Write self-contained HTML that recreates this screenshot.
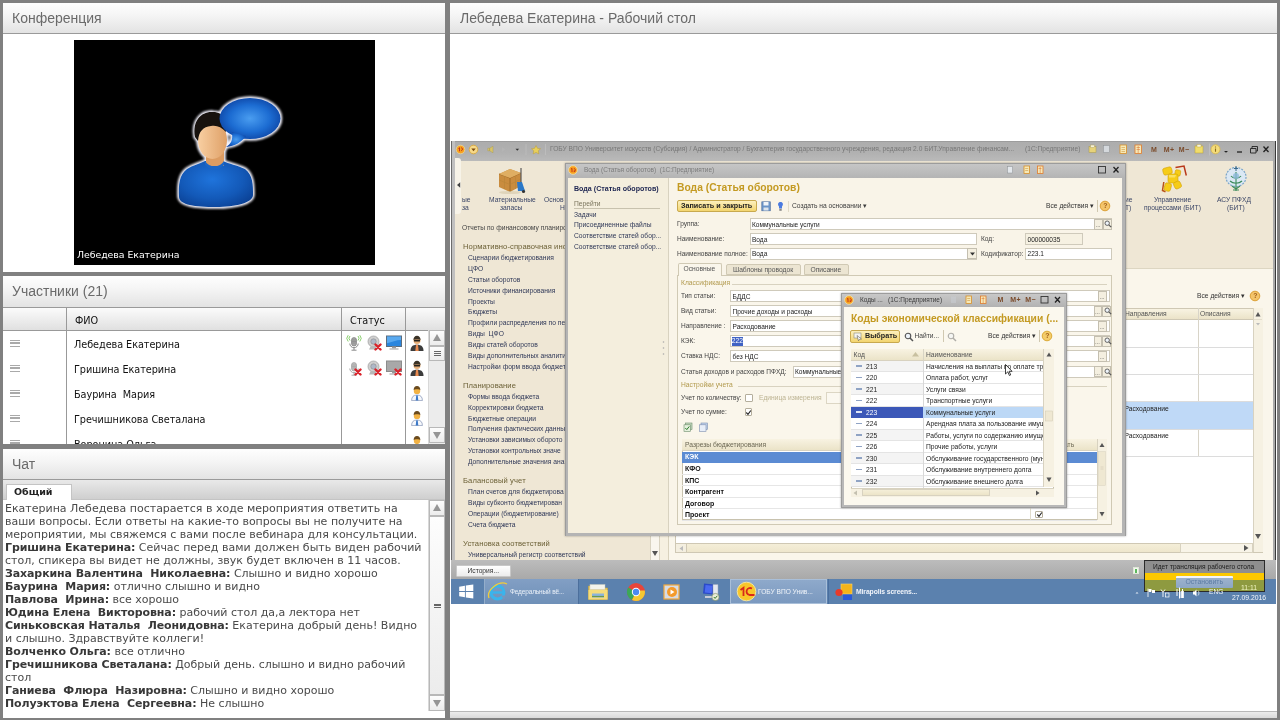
<!DOCTYPE html>
<html lang="ru"><head><meta charset="utf-8"><title>Вебинар</title>
<style>
*{box-sizing:border-box;margin:0;padding:0}
html,body{width:1280px;height:720px;overflow:hidden;background:#808080}
body{position:relative;font-family:"DejaVu Sans","Liberation Sans",sans-serif;font-size:11px;color:#333}
.panel{position:absolute;background:#fff;overflow:hidden;will-change:transform}
.hdr{position:absolute;left:0;top:0;right:0;height:31px;background:linear-gradient(#fefefe,#f5f5f5 40%,#e3e3e3);border-bottom:1px solid #9a9a9a;font:14px "Liberation Sans",sans-serif;color:#6a6a6a;padding:7px 0 0 9px;white-space:nowrap}
/* participants */
.colh{position:absolute;top:32px;height:23px;background:linear-gradient(#fbfbfb,#e0e0e0);border-bottom:1px solid #999;border-right:1px solid #999;font-size:9.7px;color:#111;padding:6.7px 0 0 8px;letter-spacing:-.05px}
.row{position:absolute;left:71px;font-size:9.7px;color:#111;white-space:pre;letter-spacing:-.05px}
.grip{position:absolute;left:7px;width:10px;height:7px;border-top:1.5px solid #aaa;border-bottom:1.5px solid #aaa}
.grip:after{content:"";position:absolute;left:0;right:0;top:1.3px;height:1.5px;background:#aaa}
.vline{position:absolute;width:1px;background:#999}
.ic{position:absolute;width:16px;height:16px}
.sb{position:absolute;background:#ececec;border-left:1px solid #d8d8d8}
.sbb{position:absolute;left:0;width:16px;height:16px;background:linear-gradient(#fdfdfd,#ececec);border:1px solid #b8b8b8}
.tri-u{position:absolute;left:3px;top:3px;border:4.5px solid transparent;border-top:0;border-bottom:7px solid #959595}
.tri-d{position:absolute;left:3px;top:4px;border:4.5px solid transparent;border-bottom:0;border-top:7px solid #959595}
.gr{position:absolute;left:4px;width:7px;height:1px;background:#666}
/* chat */
.chat{position:absolute;left:2px;top:52.6px;width:424px;font-size:11px;line-height:13.03px;color:#4a4a4a;white-space:pre}
.chat b{color:#383838;letter-spacing:-.1px}
/* desktop */
#desk{position:absolute;left:450.6px;top:141px;width:825.8px;height:463px;background:#efe7d5;overflow:hidden;filter:blur(.42px)}
#dk{position:absolute;left:-450.6px;top:-141px;width:1280px;height:720px;font-family:"Liberation Sans",sans-serif;font-size:6.7px;line-height:8px;color:#3a3a3a}
#dk div,#dk span,#dk i,#dk b,#dk svg{position:absolute}
#dk .t{white-space:nowrap}
#dk .nv{color:#2f3858;left:468px;margin-top:.4px}
#dk .ng{color:#6a5f34;left:463px;font-size:7.6px;letter-spacing:.1px}
#dk .lb{color:#444;font-size:6.55px}
#dk .in{background:#fff;border:1px solid #cfcabb;height:12px;color:#222;font-size:6.55px;padding:1.5px 0 0 1.5px;white-space:nowrap;overflow:hidden}
#dk .gold{color:#c49a22;font-weight:bold;font-size:10.3px;line-height:12px;white-space:nowrap}
#dk .grp{color:#b29a4e}
#dk .btn{background:linear-gradient(#fdf0bd,#f3d56f);border:1px solid #c8a94e;border-radius:2px;font-weight:bold;font-size:7.2px;color:#222;white-space:nowrap}
#dk .hl{background:#c9c4b4;height:1px}
#dk .cr{left:851px;width:192px;height:11.5px;border-bottom:1px solid #e4e4e4;background:#fff}
#dk .cr i{left:5px;top:4.5px;width:6px;height:1.6px;background:#8fa3c4}
#dk .cr b{left:15px;top:2px;font-weight:normal;color:#222}
#dk .cr span{left:75px;top:2px;color:#222;white-space:nowrap}
#dk .cr u{position:absolute;left:72px;top:0;width:1px;height:12px;background:#d8d8d8}
#dk .br{left:682px;width:415px;height:11.5px;border-bottom:1px solid #e6e6e6;font-weight:bold;color:#111;font-size:7px;padding:2px 0 0 3px}
#dk .wt{color:#fff;white-space:nowrap}
</style></head><body>
<svg width="0" height="0" style="position:absolute"><defs>
  <filter id="glow" x="-20%" y="-20%" width="140%" height="140%"><feGaussianBlur stdDeviation="1"/></filter>
  <radialGradient id="bub" cx="50%" cy="50%" r="60%"><stop offset="0" stop-color="#4a9df0"/><stop offset=".55" stop-color="#1c6cd2"/><stop offset="1" stop-color="#0a3c9a"/></radialGradient>
  <radialGradient id="bod" cx="45%" cy="40%" r="70%"><stop offset="0" stop-color="#1f74dc"/><stop offset=".6" stop-color="#1359b8"/><stop offset="1" stop-color="#0a3f92"/></radialGradient>
  <linearGradient id="fac" x1="0" x2="1"><stop offset="0" stop-color="#f8cfa2"/><stop offset="1" stop-color="#dfa067"/></linearGradient>
  <g id="av-body"><path d="M14 112C13.500 100 14 90 22 84C28 80 34 79 40 76L58 76C64 79 72 80 80 84C88 90 88 100 88 110C88 118 70 122 51 122C30 122 14.500 120 14 112Z"/></g>
  <g id="av-head"><ellipse cx="47.500" cy="55" rx="14.500" ry="19"/><path d="M30 52C27 35 37 26 48 27C59 27 64 37 61 47C56 42 52 40 46 41C38 42 34 46 33 56Z"/><rect x="41" y="64" width="18" height="17"/></g>
  <g id="av-bub"><ellipse cx="85" cy="33.500" rx="30.500" ry="20.500"/><path d="M67 47C68 55 66 59 61 62C70 61 77 57 81 51Z"/></g>
  <g id="x-red"><path d="M9.500 9.500l5 5M14.500 9.500l-5 5" stroke="#d9232b" stroke-width="2.400" stroke-linecap="round"/></g>
  <g id="i-cam"><circle cx="7.500" cy="6.500" r="5.500" fill="#cfcfcf" stroke="#9c9c9c" stroke-width=".7"/><circle cx="7.500" cy="6.500" r="2.700" fill="#aeb8c8" stroke="#8c8c8c" stroke-width=".6"/><path d="M3 14.500h8.500l-1.500-3h-5.500z" fill="#b8b8b8"/></g>
  <g id="i-mic"><rect x="5.500" y="2.500" width="5" height="8.500" rx="2.500" fill="#a5a5a5" stroke="#767676" stroke-width=".6"/><path d="M5.800 5h4.400M5.800 6.500h4.400M5.800 8h4.400" stroke="#7c7c7c" stroke-width=".5"/><path d="M3.800 8.500a4.200 4.200 0 0 0 8.400 0M8 13v2M5.500 15.200h5" fill="none" stroke="#8a8a8a" stroke-width="1"/></g>
  <g id="i-usr-d"><path d="M1.500 16c0-4.200 2-6.200 6.500-6.200s6.500 2 6.500 6.200z" fill="#3c3c3c"/><path d="M7 9.800h2l.7 6.200H6.300z" fill="#e88a50"/><circle cx="8" cy="5.500" r="3.500" fill="#e6ae78"/><path d="M4.400 5.200c0-3 1.500-4.500 3.600-4.500s3.600 1.500 3.600 4.500c-1-1.300-6.200-1.300-7.200 0z" fill="#3a3226"/><rect x="5" y="4.800" width="6" height="1.700" rx=".6" fill="#26221c"/></g>
  <g id="i-usr"><path d="M2.600 15.600c0-3.800 1.800-5.600 5.400-5.600s5.400 1.800 5.400 5.600z" fill="#f6f8fc" stroke="#8e9cba" stroke-width=".8"/><path d="M7.300 10.300h1.400l.6 5.200H6.700z" fill="#3a78c8"/><circle cx="8" cy="5.900" r="3.200" fill="#f2b244"/><path d="M4.600 5.300c0-2.800 1.400-4.300 3.400-4.300s3.400 1.500 3.400 4.300c-1-1.400-5.800-1.400-6.800 0z" fill="#6a4a1e"/></g>
</defs></svg>

<!-- Conference panel -->
<div class="panel" style="left:2.6px;top:2.8px;width:442.4px;height:269px">
  <div class="hdr">Конференция</div>
  <div id="video" style="position:absolute;left:71px;top:37px;width:301px;height:225px;background:#000">
    <svg viewBox="0 0 130 130" width="130" height="130" style="position:absolute;left:91px;top:45px">
      <g filter="url(#glow)" fill="#f4f4ff" stroke="#f4f4ff" stroke-width="3.500" stroke-linejoin="round"><use href="#av-body"/><use href="#av-head"/><use href="#av-bub"/></g>
      <use href="#av-body" fill="url(#bod)"/>
      <rect x="41" y="64" width="18" height="17" fill="#dc9c62"/>
      <path d="M40 76C44 83 55 83 59 76L59 80C54 86 45 86 40 80Z" fill="#1a66c8"/>
      <ellipse cx="47.500" cy="55" rx="14.500" ry="19" fill="url(#fac)"/>
      <path d="M30 52C27 35 37 26 48 27C59 27 64 37 61 47C56 42 52 40 46 41C38 42 34 46 33 56Z" fill="#17120e"/>
      <use href="#av-bub" fill="url(#bub)"/>
    </svg>
    <div style="position:absolute;left:3px;bottom:5px;color:#fff;font-size:9.400px;white-space:nowrap;letter-spacing:-.05px">Лебедева Екатерина</div>
  </div>
</div>

<!-- Participants panel -->
<div class="panel" style="left:2.6px;top:276px;width:442.4px;height:168px">
  <div class="hdr" style="height:32px">Участники (21)</div>
  <div class="colh" style="left:0;width:64px"></div>
  <div class="colh" style="left:64px;width:275px">ФИО</div>
  <div class="colh" style="left:339px;width:64px">Статус</div>
  <div class="colh" style="left:403px;width:39px;border-right:0"></div>
  <div class="vline" style="left:63px;top:55px;height:120px"></div>
  <div class="vline" style="left:338px;top:55px;height:120px"></div>
  <div class="vline" style="left:402px;top:55px;height:120px"></div>
  <div class="grip" style="top:64px"></div><div class="row" style="top:62.7px">Лебедева Екатерина</div>
  <div class="grip" style="top:89px"></div><div class="row" style="top:87.7px">Гришина Екатерина</div>
  <div class="grip" style="top:114px"></div><div class="row" style="top:112.7px">Баурина  Мария</div>
  <div class="grip" style="top:139px"></div><div class="row" style="top:137.7px">Гречишникова Светалана</div>
  <div class="grip" style="top:164px"></div><div class="row" style="top:162.7px">Воронина Ольга</div>
  <!-- row 1 icons -->
  <svg class="ic" style="left:343px;top:58.8px" viewBox="0 0 16 16"><use href="#i-mic"/><path d="M4 5.500a2.600 3 0 0 1 0-4.500M2.200 6.500a4.200 4.500 0 0 1 0-6.300M12 5.500a2.600 3 0 0 0 0-4.500M13.800 6.500a4.200 4.500 0 0 0 0-6.300" fill="none" stroke="#6cc24a" stroke-width=".8"/></svg>
  <svg class="ic" style="left:363.2px;top:58.8px" viewBox="0 0 16 16"><use href="#i-cam"/><use href="#x-red"/></svg>
  <svg class="ic" style="left:383px;top:58.8px" viewBox="0 0 16 16"><rect x=".5" y="1" width="15" height="10.500" fill="#2a86de" stroke="#5c6c7c" stroke-width="1"/><path d="M1 1.500h14v3.500c-5 0-9 2-14 3.200z" fill="#6ab4f4" opacity=".75"/><rect x="6" y="11.500" width="4" height="2" fill="#9a9a9a"/><rect x="3.500" y="13.300" width="9" height="1.400" fill="#b8b8b8"/></svg>
  <svg class="ic" style="left:406.2px;top:58.8px" viewBox="0 0 16 16"><use href="#i-usr-d"/></svg>
  <!-- row 2 icons -->
  <svg class="ic" style="left:343px;top:83.8px" viewBox="0 0 16 16"><g opacity=".75"><use href="#i-mic"/></g><use href="#x-red"/></svg>
  <svg class="ic" style="left:363.2px;top:83.8px" viewBox="0 0 16 16"><use href="#i-cam"/><use href="#x-red"/></svg>
  <svg class="ic" style="left:383px;top:83.8px" viewBox="0 0 16 16"><rect x=".5" y="1" width="15" height="10.500" fill="#a8a8a8" stroke="#8c8c8c" stroke-width="1"/><rect x="6" y="11.500" width="4" height="2" fill="#9a9a9a"/><rect x="3.500" y="13.300" width="9" height="1.400" fill="#b8b8b8"/><use href="#x-red"/></svg>
  <svg class="ic" style="left:406.2px;top:83.8px" viewBox="0 0 16 16"><use href="#i-usr-d"/></svg>
  <svg class="ic" style="left:406.2px;top:108.8px" viewBox="0 0 16 16"><use href="#i-usr"/></svg>
  <svg class="ic" style="left:406.2px;top:133.8px" viewBox="0 0 16 16"><use href="#i-usr"/></svg>
  <svg class="ic" style="left:406.2px;top:158.8px" viewBox="0 0 16 16"><use href="#i-usr"/></svg>
  <div class="sb" style="left:425px;top:54px;width:17px;height:114px">
    <div class="sbb" style="top:0"><i class="tri-u"></i></div>
    <div class="sbb" style="top:16px;height:15px"><i class="gr" style="top:4px"></i><i class="gr" style="top:6px"></i><i class="gr" style="top:8px"></i></div>
    <div class="sbb" style="top:97px"><i class="tri-d"></i></div>
  </div>
</div>

<!-- Chat panel -->
<div class="panel" style="left:2.6px;top:449px;width:442.4px;height:268.6px">
  <div class="hdr">Чат</div>
  <div style="position:absolute;left:0;top:31px;right:0;height:20px;background:linear-gradient(#e9e9e9,#cfcfcf);border-bottom:1px solid #c4c4c4"></div>
  <div style="position:absolute;left:3px;top:35px;width:66px;height:16px;background:#fff;border:1px solid #c4c4c4;border-bottom:0;font-weight:bold;font-size:9.500px;color:#222;padding:.5px 0 0 7px">Общий</div>
  <div class="chat">Екатерина Лебедева постарается в ходе мероприятия ответить на
ваши вопросы. Если ответы на какие-то вопросы вы не получите на
мероприятии, мы свяжемся с вами после вебинара для консультации.
<b>Гришина Екатерина:</b> Сейчас перед вами должен быть виден рабочий
стол, спикера вы видет не должны, звук будет включен в 11 часов.
<b>Захаркина Валентина  Николаевна:</b> Слышно и видно хорошо
<b>Баурина  Мария:</b> отлично слышно и видно
<b>Павлова  Ирина:</b> все хорошо
<b>Юдина Елена  Викторовна:</b> рабочий стол да,а лектора нет
<b>Синьковская Наталья  Леонидовна:</b> Екатерина добрый день! Видно
и слышно. Здравствуйте коллеги!
<b>Волченко Ольга:</b> все отлично
<b>Гречишникова Светалана:</b> Добрый день. слышно и видно рабочий
стол
<b>Ганиева  Флюра  Назировна:</b> Слышно и видно хорошо
<b>Полуэктова Елена  Сергеевна:</b> Не слышно</div>
  <div class="sb" style="left:425px;top:51px;width:17px;height:211px">
    <div class="sbb" style="top:0"><i class="tri-u"></i></div>
    <div class="sbb" style="top:16px;height:179px"><i class="gr" style="top:87px"></i><i class="gr" style="top:88px"></i><i class="gr" style="top:90px"></i></div>
    <div class="sbb" style="top:195px"><i class="tri-d"></i></div>
  </div>
</div>
<!-- Desktop panel -->
<div class="panel" style="left:450.3px;top:2.8px;width:827.2px;height:714.7px">
  <div class="hdr" style="padding-left:10px">Лебедева Екатерина - Рабочий стол</div>
  <div style="position:absolute;left:0;bottom:0;right:0;height:6.5px;background:linear-gradient(#ececec,#dadada);border-top:1px solid #b8b8b8"></div>
</div>
<div id="desk"><div id="dk">
<!-- main window -->
<div style="left:450.6px;top:141px;width:826.4px;height:20px;background:linear-gradient(#8c8c8c 0,#adadad 5%,#b1b1b1 60%,#bababa)"></div>
<div style="left:450.6px;top:141px;width:1.1px;height:440px;background:#6c6c6c"></div>
<div style="left:451.7px;top:141px;width:3.1px;height:440px;background:#c0c0c0"></div>
<div style="left:1272.5px;top:141px;width:3px;height:440px;background:#a9a9a9"></div>
<div style="left:1275.3px;top:141px;width:1px;height:463px;background:#3a3a3a"></div>
<div style="left:668px;top:267.5px;width:605px;height:293px;background:#faf6eb;border-top:1px solid #ddd6c2"></div>
<div style="left:454.6px;top:158px;width:6.4px;height:56px;background:#f7f3e8;border-radius:0 3px 3px 0"></div>
<svg style="left:456.500px;top:182px" width="4" height="6" viewBox="0 0 5 7"><path d="M4 0L0 3.500L4 7Z" fill="#444"/></svg>
<svg style="left:455px;top:143px" width="100" height="14" viewBox="0 0 100 14"><circle cx="5.500" cy="6.500" r="4.300" fill="#f7a01e" stroke="#e8d9a0" stroke-width=".8"/><path d="M3.500 5.500l1-.8v3.600M6 5c1.800-.8 2.300 2.800 0 2.400" stroke="#c02a18" stroke-width=".9" fill="none"/><circle cx="18.500" cy="6.500" r="4.300" fill="#f6d98a" stroke="#d9a83c" stroke-width=".9"/><path d="M16.300 5.500h4.400l-2.200 2.700z" fill="#7a4a10"/><path d="M38 3.200v6.600l-3.400-2v-2.600zM34.600 5.200h-1.800v2.600h1.800z" fill="#d8c46a" stroke="#a89a4a" stroke-width=".4"/><path d="M47 4l3 2.500-3 2.500z" fill="#b4b4b4"/><path d="M60.500 5.800h3.600l-1.800 2z" fill="#333"/><path d="M81 2.500l1.500 2.800 3.100.4-2.300 2.100.6 3.100-2.900-1.500-2.800 1.500.5-3.100-2.200-2.100 3.100-.4z" fill="#e8cf5a" stroke="#b89a3a" stroke-width=".5"/><path d="M71 1v11M90.500 1v11" stroke="#c4c4c4" stroke-width=".6"/></svg>
<div class="t" style="left:550px;top:145.3px;color:#777;font-size:6.62px">ГОБУ ВПО Университет искусств (Субсидия) / Администратор / Бухгалтерия государственного учреждения, редакция 2.0 БИТ.Управление финансам...</div>
<div class="t" style="left:1025px;top:145.3px;color:#777;font-size:6.62px">(1С:Предприятие)</div>
<svg style="left:1086px;top:142px" width="190" height="15" viewBox="0 0 190 15"><rect x="3" y="4.500" width="7" height="6" fill="#e6d27a" stroke="#a8984a" stroke-width=".5"/><rect x="4.500" y="3" width="4" height="2.500" fill="#f4f0d8" stroke="#a8984a" stroke-width=".4"/><rect x="17.500" y="3.500" width="6" height="7" fill="#d4d8dc" stroke="#8c9094" stroke-width=".5"/><rect x="34" y="3" width="6.500" height="8.500" fill="#f6e9b8" stroke="#d8902a" stroke-width=".8"/><path d="M35.500 5.500h3.500M35.500 7.500h3.500M35.500 9.500h3.500" stroke="#c8882a" stroke-width=".5"/><rect x="49" y="3" width="6.500" height="8.500" fill="#f6e9b8" stroke="#e07a2a" stroke-width=".8"/><path d="M50.500 5.500h3.500M50.500 7.500h3.500M52.200 4v7" stroke="#d86a2a" stroke-width=".5"/><rect x="109" y="4" width="8" height="7" fill="#f0dc6a" stroke="#b8a03a" stroke-width=".5"/><rect x="111" y="2.500" width="4" height="2.500" fill="#f8f4dc" stroke="#b8a03a" stroke-width=".4"/><path d="M123.500 1.500v12" stroke="#c8c8c8" stroke-width=".6"/><circle cx="129.500" cy="7.300" r="4.500" fill="#f4dc7a" stroke="#d8b84a" stroke-width=".8"/><path d="M129.500 6.500v3.200M129.500 4.500v1" stroke="#8a6a1a" stroke-width="1.100"/><path d="M138 9h4l-2 1.800z" fill="#222"/><path d="M151 10h5" stroke="#222" stroke-width="1.300"/><path d="M164.500 6.500h5.500v4.500h-5.500zM166 6.500v-2h5.500v4.500h-1.500" fill="none" stroke="#222" stroke-width=".9"/><path d="M177.500 4.500l5 5.500M182.500 4.500l-5 5.500" stroke="#222" stroke-width="1.300"/></svg>
<div class="t" style="left:1151px;top:145.5px;color:#7a4a2a;font-weight:bold;font-size:7px;letter-spacing:.3px">M&nbsp;&nbsp;&nbsp;M+&nbsp;&nbsp;M−</div>
<div class="t" style="left:462px;top:195.5px;color:#3a4566">ые</div>
<div class="t" style="left:462px;top:203.5px;color:#3a4566">за</div>
<svg style="left:496px;top:165px" width="34" height="30" viewBox="0 0 34 30"><path d="M3 9l11-5 11 4v13l-11 6-11-5z" fill="#c98c3e"/><path d="M3 9l11 4 11-5M14 13v14" stroke="#9a6424" stroke-width=".8" fill="none"/><path d="M3 15l11 4.500 11-5.500M8.500 11v13M19.500 10.500v13.500" stroke="#b88438" stroke-width=".6" fill="none"/><path d="M3 9l11-5 11 4-11 5z" fill="#dfae62"/><path d="M25 3v18l3 4" stroke="#5a5a5a" stroke-width="1.200" fill="none"/><path d="M21 17h5l3 9h-7z" fill="#2a78c8"/><circle cx="27.500" cy="26.500" r="1.600" fill="#333"/><ellipse cx="14" cy="27.500" rx="11" ry="1.600" fill="#d4c8a8" opacity=".6"/></svg>
<div class="t" style="left:489px;top:195.5px;color:#3a4566">Материальные</div>
<div class="t" style="left:500px;top:203.5px;color:#3a4566">запасы</div>
<div class="t" style="left:544px;top:195.5px;color:#3a4566">Основ</div>
<div class="t" style="left:560px;top:203.5px;color:#3a4566">Н</div>
<div class="t" style="left:1125px;top:195.5px;color:#3a4566">ие</div>
<div class="t" style="left:1125px;top:203.5px;color:#3a4566">Т)</div>
<svg style="left:1158px;top:164px" width="30" height="30" viewBox="0 0 30 30"><path d="M17.500 3.500l8.500-1.500 2.300 9.500" fill="none" stroke="#b8381a" stroke-width="1.500"/><path d="M5.800 18l-1.300 8.500 3 1.200" fill="none" stroke="#b8521a" stroke-width="1.500"/><g fill="#f6cc18" stroke="#d4a408" stroke-width=".6"><rect x="5" y="3.500" width="9" height="7" rx="2" transform="rotate(-15 9.500 7)"/><rect x="17" y="6" width="5.500" height="6" rx="1.500" transform="rotate(10 20 9)"/><rect x="10" y="10" width="10" height="9" rx="2"/><rect x="6.500" y="19" width="6.500" height="8" rx="2" transform="rotate(15 9.500 23)"/><rect x="16" y="17.500" width="7" height="7" rx="2" transform="rotate(-25 19.500 21)"/></g><path d="M11 11h7l-1 2.500h-6z" fill="#fbe574" opacity=".8"/></svg>
<div class="t" style="left:1154px;top:195.5px;color:#3a4566">Управление</div>
<div class="t" style="left:1144px;top:203.5px;color:#3a4566">процессами (БИТ)</div>
<svg style="left:1223px;top:165px" width="26" height="28" viewBox="0 0 26 28"><ellipse cx="13" cy="12" rx="10" ry="9.500" fill="#dbe8f4" stroke="#7aa4c8" stroke-width="1.200" stroke-dasharray="2 1.200"/><path d="M13 1v5M11 3.500h4" stroke="#3a6a8a" stroke-width="1"/><path d="M13 7v19M8 11c2 3 8 3 10 0M7 16c3 3 9 3 12 0M9 21l4 3 4-3M10 25h6" stroke="#3a8a5a" stroke-width="1.100" fill="none"/><circle cx="13" cy="11" r="3" fill="#8ab8d8" opacity=".8"/></svg>
<div class="t" style="left:1217px;top:195.5px;color:#3a4566">АСУ ПФХД</div>
<div class="t" style="left:1227px;top:203.5px;color:#3a4566">(БИТ)</div>
<div class="t" style="left:462px;top:224px;color:#444">Отчеты по финансовому планиро</div>
<div class="t ng" style="left:0px;top:243px;left:463px">Нормативно-справочная инф</div>
<div class="t nv" style="left:0px;top:254px;left:468px">Сценарии бюджетирования</div>
<div class="t nv" style="left:0px;top:264.7px;left:468px">ЦФО</div>
<div class="t nv" style="left:0px;top:275.5px;left:468px">Статьи оборотов</div>
<div class="t nv" style="left:0px;top:286.3px;left:468px">Источники финансирования</div>
<div class="t nv" style="left:0px;top:297.2px;left:468px">Проекты</div>
<div class="t nv" style="left:0px;top:308px;left:468px">Бюджеты</div>
<div class="t nv" style="left:0px;top:318.8px;left:468px">Профили распределения по пе</div>
<div class="t nv" style="left:0px;top:329.7px;left:468px">Виды&nbsp; ЦФО</div>
<div class="t nv" style="left:0px;top:340.5px;left:468px">Виды статей оборотов</div>
<div class="t nv" style="left:0px;top:351.3px;left:468px">Виды дополнительных аналити</div>
<div class="t nv" style="left:0px;top:362.2px;left:468px">Настройки форм ввода бюджет</div>
<div class="t ng" style="left:0px;top:381.5px;left:463px">Планирование</div>
<div class="t nv" style="left:0px;top:392.5px;left:468px">Формы ввода бюджета</div>
<div class="t nv" style="left:0px;top:403.3px;left:468px">Корректировки бюджета</div>
<div class="t nv" style="left:0px;top:414.2px;left:468px">Бюджетные операции</div>
<div class="t nv" style="left:0px;top:425px;left:468px">Получения фактических данных</div>
<div class="t nv" style="left:0px;top:435.8px;left:468px">Установки зависимых оборото</div>
<div class="t nv" style="left:0px;top:446.7px;left:468px">Установки контрольных значе</div>
<div class="t nv" style="left:0px;top:457.5px;left:468px">Дополнительные значения ана</div>
<div class="t ng" style="left:0px;top:477px;left:463px">Балансовый учет</div>
<div class="t nv" style="left:0px;top:488px;left:468px">План счетов для бюджетирова</div>
<div class="t nv" style="left:0px;top:498.8px;left:468px">Виды субконто бюджетирован</div>
<div class="t nv" style="left:0px;top:509.7px;left:468px">Операции (бюджетирование)</div>
<div class="t nv" style="left:0px;top:520.5px;left:468px">Счета бюджета</div>
<div class="t ng" style="left:0px;top:540px;left:463px">Установка соответствий</div>
<div class="t nv" style="left:0px;top:550.7px;left:468px">Универсальный регистр соответствий</div>
<div style="left:650px;top:216px;width:9.5px;height:344px;background:#f9f6ee;border-left:1px solid #d8d2c0;border-right:1px solid #d8d2c0"></div>
<svg style="left:652px;top:551px" width="6" height="5" viewBox="0 0 6 5"><path d="M0 0h6L3 5z" fill="#555"/></svg>
<div style="left:659.5px;top:216px;width:8.5px;height:344px;background:#f6f0e1"></div>
<div style="left:667.5px;top:216px;width:1px;height:344px;background:#d9d2be"></div>
<svg style="left:662px;top:340px" width="3" height="16" viewBox="0 0 3 16"><circle cx="1.500" cy="2" r=".8" fill="#aaa"/><circle cx="1.500" cy="8" r=".8" fill="#aaa"/><circle cx="1.500" cy="14" r=".8" fill="#aaa"/></svg>
<div class="t" style="left:1197px;top:292px;color:#333">Все действия ▾</div>
<svg style="left:1249px;top:290px" width="12" height="12" viewBox="0 0 12 12"><circle cx="6" cy="6" r="4.800" fill="#f4c46a" stroke="#d89a2a" stroke-width=".9"/></svg>
<div class="t" style="left:1253.3px;top:292.3px;color:#a0601a;font-weight:bold;font-size:7px">?</div>
<div style="left:675px;top:307.5px;width:587.5px;height:245px;background:#fff;border:1px solid #cfc8b4"></div>
<div style="left:675px;top:307.5px;width:587.5px;height:12.5px;background:linear-gradient(#f8f3e2,#ebe3c8);border:1px solid #cfc8b4"></div>
<div class="t" style="left:1126px;top:310px;color:#555;margin-left:-1px">Направления</div>
<div class="t" style="left:1200px;top:310px;color:#555">Описания</div>
<div style="left:1197.5px;top:308px;width:1px;height:148px;background:#d8d4c8"></div>
<div style="left:676px;top:347px;width:577px;height:1px;background:#dcdcdc"></div>
<div style="left:676px;top:374px;width:577px;height:1px;background:#dcdcdc"></div>
<div style="left:676px;top:401px;width:577px;height:1px;background:#dcdcdc"></div>
<div style="left:676px;top:429px;width:577px;height:1px;background:#dcdcdc"></div>
<div style="left:676px;top:456px;width:577px;height:1px;background:#dcdcdc"></div>
<div style="left:676px;top:401.5px;width:577px;height:27.5px;background:#bfd9f7"></div>
<div class="t" style="left:1124.5px;top:405px;color:#222">Расходование</div>
<div class="t" style="left:1124.5px;top:432px;color:#222">Расходование</div>
<div style="left:1253px;top:308px;width:9.5px;height:244px;background:#f6f1e2;border-left:1px solid #d8d2c0"></div>
<svg style="left:1254px;top:310px" width="8" height="18" viewBox="0 0 8 18"><path d="M1.500 6.500h5L4 2z" fill="#555"/><path d="M2 13h4L4 15.500z" fill="#bbb"/><path d="M0 9.500h8" stroke="#d8d2c0" stroke-width=".6"/></svg>
<svg style="left:1254px;top:532px" width="8" height="8" viewBox="0 0 8 8"><path d="M1 2h6L4 7z" fill="#555"/></svg>
<div style="left:675px;top:543px;width:578px;height:9.5px;background:linear-gradient(#f4eed8,#eee6cc);border:1px solid #cfc8b4"></div>
<div style="left:1180px;top:543px;width:73px;height:9.5px;background:#f8f4e8;border:1px solid #d8d2c0"></div>
<svg style="left:1243px;top:545px" width="6" height="6" viewBox="0 0 6 6"><path d="M1 0v6l4.500-3z" fill="#555"/></svg>
<div style="left:675px;top:543px;width:12px;height:9.5px;background:#f4efe0;border:1px solid #cfc8b4"></div>
<svg style="left:679px;top:545.500px" width="5" height="5" viewBox="0 0 5 5"><path d="M4 0v5L.5 2.500z" fill="#bbb"/></svg>
<div style="left:450.6px;top:559.5px;width:826.4px;height:20px;background:linear-gradient(#bcbcbc,#a8a8a8)"></div>
<div style="left:455.5px;top:564.5px;width:55.5px;height:12px;background:linear-gradient(#fff,#ececec);border:1px solid #c8c8c8;border-radius:1px"></div>
<div class="t" style="left:467.5px;top:566.8px;color:#333">История...</div>
<div style="left:1133px;top:567px;width:6px;height:6.5px;background:#f4f8f0;border:1px solid #e0e8d8"></div>
<div style="left:1135px;top:568.5px;width:2px;height:4px;background:#5cb85c"></div>
<!-- taskbar -->
<div style="left:450.6px;top:579px;width:826.4px;height:25px;background:#5b81ae"></div>
<div style="left:483.5px;top:579px;width:95px;height:25px;background:linear-gradient(#829fc4,#6f90b8);border-left:1px solid #94aecb;border-right:1px solid #4c6f9c"></div>
<div style="left:729.5px;top:579px;width:97px;height:25px;background:linear-gradient(#8ea9cb,#7b99bf);border:1px solid #a9bfd9"></div>
<div style="left:827.5px;top:579px;width:1px;height:25px;background:#4a6e9e"></div>
<svg style="left:458px;top:584px" width="16.500" height="15" viewBox="0 0 18 17"><path d="M1 3l6.500-1v6H1zM8.500 1.800L17 .5V8H8.500zM1 9h6.500v6L1 14zM8.500 9H17v7.500l-8.500-1.300z" fill="#fff"/></svg>
<svg style="left:487px;top:581px" width="22" height="21" viewBox="0 0 22 21"><circle cx="10.500" cy="11.500" r="6.500" fill="none" stroke="#3ab4ec" stroke-width="3"/><path d="M5 11.500h11" stroke="#3ab4ec" stroke-width="2.400"/><path d="M14 14.500h5l-2 4z" fill="#7896bd"/><path d="M2 17C-1 9 12-1 20 3" fill="none" stroke="#f0cc3a" stroke-width="1.300"/></svg>
<div class="t" style="left:510px;top:587.5px;color:#eaf0f8;font-size:6.5px;letter-spacing:-.15px">Федеральный вё...</div>
<svg style="left:587px;top:582px" width="22" height="19" viewBox="0 0 22 19"><path d="M1.500 4h7l1.500 2h10.500v11.500h-19z" fill="#e8c860" stroke="#c8a840" stroke-width=".6"/><rect x="3" y="2.500" width="15" height="5" fill="#f4f4ec" stroke="#c8c8b8" stroke-width=".4"/><path d="M1.500 8h19v9.500h-19z" fill="#f4dc7a"/><rect x="5" y="11.500" width="12" height="4" fill="#8ab4dc"/><path d="M5 14.500h12" stroke="#6a9a4a" stroke-width="1.200"/></svg>
<svg style="left:626px;top:582px" width="20" height="20" viewBox="0 0 20 20"><circle cx="10" cy="10" r="9" fill="#e8453a"/><path d="M10 10L2.200 5.500A9 9 0 0 0 6 18.100z" fill="#3aa858"/><path d="M10 10L6 18.100A9 9 0 0 0 18.800 8.500H10z" fill="#f4c832"/><circle cx="10" cy="10" r="4.200" fill="#fff"/><circle cx="10" cy="10" r="3.200" fill="#4a8af0"/></svg>
<svg style="left:663px;top:583px" width="18" height="18" viewBox="0 0 18 18"><rect x="1" y="2" width="15" height="14" fill="#d8dce4" stroke="#f4a83a" stroke-width="1.200"/><circle cx="9" cy="9" r="5" fill="#f49a2a"/><path d="M7.500 6.500v5l4-2.500z" fill="#fff"/></svg>
<svg style="left:700px;top:582px" width="22" height="20" viewBox="0 0 22 20"><path d="M4 1.500l10 1-1 10-10-1z" fill="#2a4ac8"/><path d="M5.500 3l7 .8-.8 7.500-7-.8z" fill="#4a6af0"/><path d="M13 2.500h5v10h-5z" fill="#e4e8f0" stroke="#9aa4b8" stroke-width=".5"/><path d="M5 14h9v2H5z" fill="#c8ccd8"/><circle cx="15.500" cy="15" r="3.600" fill="#e8ecd8" stroke="#7a8a5a" stroke-width=".6"/><path d="M13.800 15l1.300 1.400 2.200-2.600" stroke="#3a7a2a" stroke-width="1" fill="none"/></svg>
<svg style="left:736px;top:581px" width="21" height="21" viewBox="0 0 21 21"><circle cx="10.500" cy="10.500" r="9.300" fill="#f9c62a" stroke="#f4e49a" stroke-width="1"/><path d="M4.500 9l3-2.200v8.200" fill="none" stroke="#d8281a" stroke-width="1.800"/><path d="M16 7.500c-5-2.500-8 5-2.500 6.500h5" fill="none" stroke="#d8281a" stroke-width="1.800"/></svg>
<div class="t" style="left:758px;top:587.5px;color:#f0f4fa;font-size:6.6px">ГОБУ ВПО Унив...</div>
<svg style="left:834px;top:582px" width="20" height="20" viewBox="0 0 20 20"><rect x="7" y="2" width="11" height="10" fill="#f4b41a" stroke="#f8d46a" stroke-width=".6"/><circle cx="5" cy="10.500" r="3.600" fill="#e83a2a"/><rect x="9" y="12.500" width="9" height="5.500" fill="#2a5ad8"/></svg>
<div class="t" style="left:856px;top:587.5px;color:#f0f4fa;font-size:6.8px;font-weight:bold;letter-spacing:-.1px">Mirapolis screens...</div><!-- window: Вода (Статья оборотов) -->
<div style="left:564.5px;top:162.5px;width:561px;height:373.5px;background:#f9f4e8;border:1px solid #9c9c9c;box-shadow:0 0 2px rgba(0,0,0,.35)"></div>
<div style="left:565.5px;top:163.5px;width:559px;height:14px;background:linear-gradient(#c6c6c6,#b4b4b4)"></div>
<div style="left:565.5px;top:177.5px;width:2px;height:356px;background:#b4b4b4"></div>
<div style="left:1122px;top:177.5px;width:2.5px;height:356px;background:#b4b4b4"></div>
<div style="left:565.5px;top:533px;width:559px;height:2.5px;background:#b4b4b4"></div>
<svg style="left:567.5px;top:165px" width="10" height="10" viewBox="0 0 10 10"><circle cx="5" cy="5" r="4.300" fill="#f7a01e" stroke="#f4e4a8" stroke-width=".8"/><path d="M3 4.200l1-.8v3.600M5.800 3.800c1.800-.8 2.300 2.800 0 2.400h1.500" stroke="#c02a18" stroke-width=".9" fill="none"/></svg>
<div class="t" style="left:584px;top:166.3px;color:#7c7c7c;font-size:6.5px">Вода (Статья оборотов)&nbsp; (1С:Предприятие)</div>
<svg style="left:1004px;top:164px" width="120" height="12" viewBox="0 0 120 12"><rect x="3.500" y="2.500" width="5" height="6.500" fill="#e4e8ec" stroke="#8c9094" stroke-width=".5"/><rect x="20" y="2" width="5.500" height="7.500" fill="#f6e9b8" stroke="#d8902a" stroke-width=".8"/><path d="M21.200 4.500h3M21.200 6.500h3" stroke="#c8882a" stroke-width=".5"/><rect x="33.500" y="2" width="5.500" height="7.500" fill="#f6e9b8" stroke="#e07a2a" stroke-width=".8"/><path d="M34.500 4.500h3M36.200 3v6" stroke="#d86a2a" stroke-width=".5"/><rect x="94.500" y="2.500" width="7" height="6.500" fill="none" stroke="#333" stroke-width=".9"/><path d="M109.500 3l5 5.500M114.500 3l-5 5.500" stroke="#222" stroke-width="1.300"/></svg>
<div style="left:567.5px;top:177.5px;width:101px;height:355.5px;background:#f4eedd;border-right:1px solid #d8d2c0"></div>
<div class="t" style="left:574px;top:184.5px;color:#1c2450;font-weight:bold;font-size:7.1px">Вода (Статья оборотов)</div>
<div class="t" style="left:574px;top:199.5px;color:#7a745c">Перейти</div>
<div style="left:574px;top:208px;width:86px;height:1px;background:#c8c2ae"></div>
<div class="t" style="left:574px;top:210.5px;color:#2f3858">Задачи</div>
<div class="t" style="left:574px;top:221.3px;color:#2f3858">Присоединенные файлы</div>
<div class="t" style="left:574px;top:232.2px;color:#2f3858">Соответствие статей обор...</div>
<div class="t" style="left:574px;top:243px;color:#2f3858">Соответствие статей обор...</div>
<svg style="left:661.500px;top:340px" width="3" height="16" viewBox="0 0 3 16"><circle cx="1.500" cy="2" r=".8" fill="#aaa"/><circle cx="1.500" cy="8" r=".8" fill="#aaa"/><circle cx="1.500" cy="14" r=".8" fill="#aaa"/></svg>
<div class="gold" style="left:677px;top:182.2px;">Вода (Статья оборотов)</div>
<div style="left:677px;top:199.5px;width:80px;height:12.5px;background:linear-gradient(#fdf0bd,#f3d56f);border:1px solid #c8a94e;border-radius:2px"></div>
<div class="t" style="left:681px;top:202px;font-weight:bold;font-size:7.2px;color:#222">Записать и закрыть</div>
<svg style="left:761px;top:201px" width="30" height="11" viewBox="0 0 30 11"><rect x=".8" y=".8" width="8.500" height="9" fill="#6a94c8" stroke="#4a6a9a" stroke-width=".6"/><rect x="2.500" y="1" width="5" height="3.500" fill="#f0f4f8"/><rect x="2.500" y="6.500" width="5" height="3" fill="#dce4ec"/><path d="M19.500 1c2.500 0 3.200 2.500 1.500 4.500v2h-3v-2c-1.700-2-1-4.500 1.500-4.500z" fill="#4a7ae0"/><rect x="18.300" y="7.800" width="2.400" height="2" fill="#888"/><path d="M27.500 0v11" stroke="#d0c8b0" stroke-width=".6"/></svg>
<div class="t" style="left:792px;top:202px;color:#3c3c3c">Создать на основании ▾</div>
<div class="t" style="left:1046px;top:202px;color:#333">Все действия ▾</div>
<div style="left:1096.5px;top:200px;width:0.8px;height:12px;background:#d0c8b0"></div>
<svg style="left:1099px;top:200px" width="12" height="12" viewBox="0 0 12 12"><circle cx="6" cy="6" r="4.800" fill="#f4c46a" stroke="#d89a2a" stroke-width=".9"/></svg>
<div class="t" style="left:1103.3px;top:202.3px;color:#a0601a;font-weight:bold;font-size:7px">?</div>
<div class="t lb" style="left:677px;top:220px;">Группа:</div>
<div class="in" style="left:749.5px;top:218px;width:362px;">Коммунальные услуги</div>
<div style="left:1094px;top:218.5px;width:8.5px;height:11px;background:#f4efe0;border:1px solid #c4bfb0"></div>
<div class="t" style="left:1095.5px;top:221px;color:#333;font-size:6px">...</div>
<div style="left:1102.5px;top:218.5px;width:9px;height:11px;background:#f4efe0;border:1px solid #c4bfb0"></div>
<svg style="left:1104px;top:220px" width="8" height="8" viewBox="0 0 8 8"><circle cx="3.200" cy="3.200" r="2.200" fill="#eef4fa" stroke="#555" stroke-width=".9"/><path d="M4.800 4.800l2.400 2.400" stroke="#555" stroke-width="1.200"/></svg>
<div class="t lb" style="left:677px;top:235px;">Наименование:</div>
<div class="in" style="left:749.5px;top:233px;width:227px;">Вода</div>
<div class="t lb" style="left:981px;top:235px;">Код:</div>
<div class="in" style="left:1025px;top:233px;width:57.5px;background:#f6f1e2">000000035</div>
<div class="t lb" style="left:677px;top:249.5px;">Наименование полное:</div>
<div class="in" style="left:749.5px;top:247.5px;width:227px;">Вода</div>
<div style="left:967px;top:248px;width:9.5px;height:11px;background:#f4efe0;border:1px solid #c4bfb0"></div>
<svg style="left:969.500px;top:252px" width="5" height="4" viewBox="0 0 5 4"><path d="M0 .5h5L2.500 3.500z" fill="#333"/></svg>
<div class="t lb" style="left:981px;top:249.5px;">Кодификатор:</div>
<div class="in" style="left:1025px;top:247.5px;width:86.5px;">223.1</div>
<div style="left:677px;top:274.5px;width:434.5px;height:250.5px;background:#faf6eb;border:1px solid #d0c9b4"></div>
<div style="left:677.5px;top:263px;width:44.5px;height:12.5px;background:#faf6eb;border:1px solid #d0c9b4;border-bottom:0;border-radius:2px 2px 0 0"></div>
<div class="t" style="left:683.5px;top:265.3px;color:#555">Основные</div>
<div style="left:726px;top:264px;width:74.5px;height:10.5px;background:#ece5d2;border:1px solid #d0c9b4;border-radius:2px 2px 0 0"></div>
<div class="t" style="left:733px;top:265.5px;color:#555">Шаблоны проводок</div>
<div style="left:803.5px;top:264px;width:45px;height:10.5px;background:#ece5d2;border:1px solid #d0c9b4;border-radius:2px 2px 0 0"></div>
<div class="t" style="left:810.5px;top:265.5px;color:#555">Описание</div>
<div class="t grp" style="left:681px;top:279px;">Классификация</div>
<div style="left:732px;top:284px;width:375px;height:1px;background:#d8d2c0"></div>
<div class="t lb" style="left:681px;top:292px;">Тип статьи:</div>
<div class="in" style="left:730px;top:290px;width:380px;">БДДС</div>
<div class="t lb" style="left:681px;top:307px;">Вид статьи:</div>
<div class="in" style="left:730px;top:305px;width:380px;">Прочие доходы и расходы</div>
<div class="t lb" style="left:681px;top:322px;">Направление :</div>
<div class="in" style="left:730px;top:320px;width:380px;">Расходование</div>
<div class="t lb" style="left:681px;top:337px;">КЭК:</div>
<div class="in" style="left:730px;top:335px;width:380px;"></div>
<div class="t lb" style="left:681px;top:352px;">Ставка НДС:</div>
<div class="in" style="left:730px;top:350px;width:380px;">без НДС</div>
<div style="left:731.5px;top:337px;width:11px;height:8.5px;background:#3f62c4"></div>
<div class="t wt" style="left:731.8px;top:337px;">222</div>
<div class="t lb" style="left:681px;top:367.5px;">Статья доходов и расходов ПФХД:</div>
<div class="in" style="left:792.5px;top:365.5px;width:318px;">Коммунальные</div>
<div style="left:1097.5px;top:290.5px;width:9.5px;height:11px;background:#f4efe0;border:1px solid #c4bfb0"></div>
<div class="t" style="left:1099.5px;top:293px;color:#333;font-size:6px">...</div>
<div style="left:1093.5px;top:305.5px;width:8.5px;height:11px;background:#f4efe0;border:1px solid #c4bfb0"></div>
<div class="t" style="left:1095px;top:308px;color:#333;font-size:6px">...</div>
<div style="left:1102px;top:305.5px;width:9px;height:11px;background:#f4efe0;border:1px solid #c4bfb0"></div>
<svg style="left:1103.500px;top:307px" width="8" height="8" viewBox="0 0 8 8"><circle cx="3.200" cy="3.200" r="2.200" fill="#eef4fa" stroke="#555" stroke-width=".9"/><path d="M4.800 4.800l2.400 2.400" stroke="#555" stroke-width="1.200"/></svg>
<div style="left:1097.5px;top:320.5px;width:9.5px;height:11px;background:#f4efe0;border:1px solid #c4bfb0"></div>
<div class="t" style="left:1099.5px;top:323px;color:#333;font-size:6px">...</div>
<div style="left:1093.5px;top:335.5px;width:8.5px;height:11px;background:#f4efe0;border:1px solid #c4bfb0"></div>
<div class="t" style="left:1095px;top:338px;color:#333;font-size:6px">...</div>
<div style="left:1102px;top:335.5px;width:9px;height:11px;background:#f4efe0;border:1px solid #c4bfb0"></div>
<svg style="left:1103.500px;top:337px" width="8" height="8" viewBox="0 0 8 8"><circle cx="3.200" cy="3.200" r="2.200" fill="#eef4fa" stroke="#555" stroke-width=".9"/><path d="M4.800 4.800l2.400 2.400" stroke="#555" stroke-width="1.200"/></svg>
<div style="left:1097.5px;top:350.5px;width:9.5px;height:11px;background:#f4efe0;border:1px solid #c4bfb0"></div>
<div class="t" style="left:1099.5px;top:353px;color:#333;font-size:6px">...</div>
<div style="left:1093.5px;top:366px;width:8.5px;height:11px;background:#f4efe0;border:1px solid #c4bfb0"></div>
<div class="t" style="left:1095px;top:368.5px;color:#333;font-size:6px">...</div>
<div style="left:1102px;top:366px;width:9px;height:11px;background:#f4efe0;border:1px solid #c4bfb0"></div>
<svg style="left:1103.500px;top:367.5px" width="8" height="8" viewBox="0 0 8 8"><circle cx="3.200" cy="3.200" r="2.200" fill="#eef4fa" stroke="#555" stroke-width=".9"/><path d="M4.800 4.800l2.400 2.400" stroke="#555" stroke-width="1.200"/></svg>
<div class="t grp" style="left:681px;top:380.5px;">Настройки учета</div>
<div style="left:738px;top:386px;width:369px;height:1px;background:#d8d2c0"></div>
<div class="t lb" style="left:681px;top:394px;">Учет по количеству:</div>
<div style="left:745px;top:394px;width:7.5px;height:7.5px;background:#fff;border:1px solid #b4ae9c;border-radius:1px"></div>
<div class="t" style="left:759px;top:394px;color:#bdb493">Единица измерения</div>
<div class="in" style="left:826px;top:392px;width:20px;border-color:#dcd6c4;background:#fbf8f0"></div>
<div class="t lb" style="left:681px;top:408px;">Учет по сумме:</div>
<div style="left:744.5px;top:408px;width:7.5px;height:7.5px;background:#fff;border:1px solid #b4ae9c;border-radius:1px"></div>
<svg style="left:745px;top:408.500px" width="7" height="7" viewBox="0 0 7 7"><path d="M1.300 3.500l1.700 1.800 2.800-3.800" stroke="#222" stroke-width="1.100" fill="none"/></svg>
<svg style="left:683px;top:422px" width="26" height="11" viewBox="0 0 26 11"><rect x="2.500" y="1" width="6.500" height="6.500" fill="#c8dcc0" stroke="#6a8a6a" stroke-width=".6"/><rect x="1" y="2.800" width="6.500" height="6.500" fill="#e4f0dc" stroke="#6a8a6a" stroke-width=".6"/><path d="M2.300 6l1.500 1.600 2.500-3.200" stroke="#2a7a2a" stroke-width="1" fill="none"/><rect x="18" y="1" width="6.500" height="6.500" fill="#c4d4ec" stroke="#7a8cb0" stroke-width=".6"/><rect x="16.500" y="2.800" width="6.500" height="6.500" fill="#e8eef8" stroke="#7a8cb0" stroke-width=".6"/></svg>
<div style="left:681.5px;top:438.5px;width:425.5px;height:81.5px;background:#fff;border:1px solid #c8c2ae"></div>
<div style="left:682px;top:439px;width:424.5px;height:12px;background:linear-gradient(#f8f3e2,#ebe3c8);border-bottom:1px solid #d8d2c0"></div>
<div class="t" style="left:685px;top:441px;color:#6c6854">Разрезы бюджетирования</div>
<div class="t" style="left:1064px;top:441px;color:#6c6854">ать</div>
<div style="left:682px;top:451.5px;width:415px;height:11.5px;background:#5b8bd3"></div>
<div class="t wt" style="left:685px;top:453.3px;font-weight:bold;font-size:7px">КЭК</div>
<div class="br" style="top:463px">КФО</div>
<div class="br" style="top:474.5px">КПС</div>
<div class="br" style="top:486px">Контрагент</div>
<div class="br" style="top:497.5px">Договор</div>
<div class="br" style="top:509px">Проект</div>
<div style="left:1030px;top:439px;width:1px;height:80.5px;background:#e0dccc"></div>
<div style="left:1097px;top:439px;width:10px;height:80.5px;background:#f6f1e2;border-left:1px solid #d8d2c0"></div>
<svg style="left:1098px;top:441px" width="8" height="78" viewBox="0 0 8 78"><path d="M1.500 6h5L4 2z" fill="#555"/><rect x=".5" y="10.500" width="7" height="34" fill="#efe8d2" stroke="#d8d2c0" stroke-width=".5"/><path d="M2.500 26h3M2.500 28h3" stroke="#c8c2ae" stroke-width=".5"/><path d="M1.500 71h5L4 75.500z" fill="#555"/></svg>
<div style="left:1035px;top:510.5px;width:7.5px;height:7.5px;background:#fff;border:1px solid #b4ae9c;border-radius:1px"></div>
<svg style="left:1035.500px;top:511px" width="7" height="7" viewBox="0 0 7 7"><path d="M1.300 3.500l1.700 1.800 2.800-3.800" stroke="#222" stroke-width="1.100" fill="none"/></svg>
<!-- popup: Коды экономической классификации -->
<div style="left:840.5px;top:292.5px;width:226.5px;height:215px;background:#fbf8ee;border:1px solid #9c9c9c;box-shadow:0 0 2px rgba(0,0,0,.35)"></div>
<div style="left:841.5px;top:293.5px;width:224.5px;height:13.5px;background:linear-gradient(#c8c8c8,#b2b2b2)"></div>
<div style="left:841.5px;top:307px;width:2.5px;height:198px;background:#b8b8b8"></div>
<div style="left:1063.5px;top:307px;width:2.5px;height:198px;background:#b8b8b8"></div>
<div style="left:841.5px;top:504.5px;width:224.5px;height:2.5px;background:#b8b8b8"></div>
<svg style="left:843.5px;top:295px" width="10" height="10" viewBox="0 0 10 10"><circle cx="5" cy="5" r="4.300" fill="#f7a01e" stroke="#f4e4a8" stroke-width=".8"/><path d="M3 4.200l1-.8v3.600M5.800 3.800c1.800-.8 2.300 2.800 0 2.400h1.500" stroke="#c02a18" stroke-width=".9" fill="none"/></svg>
<div class="t" style="left:860px;top:295.8px;color:#3c3c3c;font-size:6.45px">Коды&nbsp;...&nbsp;&nbsp; (1С:Предприятие)</div>
<svg style="left:948px;top:294px" width="118" height="12" viewBox="0 0 118 12"><rect x="3" y="2.500" width="5" height="6.500" fill="#c8ccd0" opacity=".6"/><rect x="18" y="2" width="5.500" height="7.500" fill="#f6e9b8" stroke="#d8902a" stroke-width=".8"/><path d="M19.200 4.500h3M19.200 6.500h3" stroke="#c8882a" stroke-width=".5"/><rect x="32.500" y="2" width="5.500" height="7.500" fill="#f6e9b8" stroke="#e07a2a" stroke-width=".8"/><path d="M33.500 4.500h3M35.200 3v6" stroke="#d86a2a" stroke-width=".5"/><rect x="93" y="2.500" width="7" height="6.500" fill="none" stroke="#333" stroke-width=".9"/><path d="M107 3l5 5.500M112 3l-5 5.500" stroke="#222" stroke-width="1.300"/></svg>
<div class="t" style="left:997.5px;top:296px;color:#7a4a2a;font-weight:bold;font-size:7px;letter-spacing:.3px">M&nbsp;&nbsp;&nbsp;M+&nbsp;&nbsp;M−</div>
<div class="gold" style="left:851px;top:312.5px;">Коды экономической классификации (...</div>
<div style="left:850px;top:329.5px;width:50px;height:13px;background:linear-gradient(#fdf0bd,#f3d56f);border:1px solid #c8a94e;border-radius:2px"></div>
<svg style="left:853px;top:331.500px" width="10" height="9" viewBox="0 0 10 9"><rect x="1" y="1" width="7" height="5" fill="#f4f4f0" stroke="#8a8a7a" stroke-width=".6"/><path d="M4 3.500l4.500 3.500-2 .3-1 1.500z" fill="#fff" stroke="#444" stroke-width=".5"/></svg>
<div class="t" style="left:865px;top:332.2px;font-weight:bold;font-size:7.2px;color:#222">Выбрать</div>
<svg style="left:904px;top:331.500px" width="10" height="10" viewBox="0 0 8 8"><circle cx="3.200" cy="3.200" r="2.200" fill="#eef4fa" stroke="#555" stroke-width=".9"/><path d="M4.800 4.800l2.400 2.400" stroke="#555" stroke-width="1.200"/></svg>
<div class="t" style="left:914.5px;top:332.2px;color:#444">Найти...</div>
<div style="left:942.5px;top:330px;width:0.8px;height:12px;background:#d0c8b0"></div>
<svg style="left:947px;top:331.500px" width="10" height="10" viewBox="0 0 8 8" opacity=".45"><circle cx="3.200" cy="3.200" r="2.200" fill="#eef4fa" stroke="#555" stroke-width=".9"/><path d="M4.800 4.800l2.400 2.400" stroke="#555" stroke-width="1.200"/></svg>
<div class="t" style="left:988px;top:332.2px;color:#333">Все действия ▾</div>
<div style="left:1038.5px;top:330px;width:0.8px;height:12px;background:#d0c8b0"></div>
<svg style="left:1041px;top:330px" width="12" height="12" viewBox="0 0 12 12"><circle cx="6" cy="6" r="4.800" fill="#f4cc6a" stroke="#d8a42a" stroke-width=".9"/></svg>
<div class="t" style="left:1045.3px;top:332.3px;color:#a0601a;font-weight:bold;font-size:7px">?</div>
<div style="left:850.5px;top:348.5px;width:203.5px;height:148.5px;background:#fff;border:1px solid #c8c2ae"></div>
<div style="left:851px;top:349px;width:202.5px;height:11.5px;background:linear-gradient(#f8f3e2,#ebe3c8);border-bottom:1px solid #d8d2c0"></div>
<div class="t" style="left:853.5px;top:350.7px;color:#555">Код</div>
<div class="t" style="left:926px;top:350.7px;color:#555">Наименование</div>
<svg style="left:912px;top:352px" width="7" height="5" viewBox="0 0 7 5"><path d="M0 4.500h7L3.500 0z" fill="#c8c0a0"/></svg>
<div style="left:923px;top:349px;width:1px;height:138px;background:#d8d4c4"></div>
<div class="cr" style="top:360.5px;background:linear-gradient(90deg,#f4f4f4 72px,#fff 72px)"><i></i><b>213</b><u></u><span>Начисления на выплаты по оплате тру</span></div>
<div class="cr" style="top:372px"><i></i><b>220</b><u></u><span>Оплата работ, услуг</span></div>
<div class="cr" style="top:383.5px;background:linear-gradient(90deg,#f4f4f4 72px,#fff 72px)"><i></i><b>221</b><u></u><span>Услуги связи</span></div>
<div class="cr" style="top:395px"><i></i><b>222</b><u></u><span>Транспортные услуги</span></div>
<div class="cr" style="top:406.5px;background:#bcd8f6;border-color:#bcd8f6"><div style="left:0;top:0;width:72px;height:11.500px;background:#3c58b8"></div><i style="background:#dfe6f6"></i><b style="color:#fff">223</b><span>Коммунальные услуги</span></div>
<div class="cr" style="top:418px"><i></i><b>224</b><u></u><span>Арендная плата за пользование имущ</span></div>
<div class="cr" style="top:429.5px;background:linear-gradient(90deg,#f4f4f4 72px,#fff 72px)"><i></i><b>225</b><u></u><span>Работы, услуги по содержанию имуще</span></div>
<div class="cr" style="top:441px"><i></i><b>226</b><u></u><span>Прочие работы, услуги</span></div>
<div class="cr" style="top:452.5px;background:linear-gradient(90deg,#f4f4f4 72px,#fff 72px)"><i></i><b>230</b><u></u><span>Обслуживание государственного (мун</span></div>
<div class="cr" style="top:464px"><i></i><b>231</b><u></u><span>Обслуживание внутреннего долга</span></div>
<div class="cr" style="top:475.5px;background:linear-gradient(90deg,#f4f4f4 72px,#fff 72px)"><i></i><b>232</b><u></u><span>Обслуживание внешнего долга</span></div>
<div style="left:1043px;top:349px;width:10.5px;height:138px;background:#f6f1e2;border-left:1px solid #d8d2c0"></div>
<svg style="left:1044.500px;top:350px" width="8" height="136" viewBox="0 0 8 136"><path d="M1.500 6.500h5L4 2.500z" fill="#555"/><rect x=".3" y="61" width="7.400" height="10" fill="#efe8d2" stroke="#d0c9b4" stroke-width=".5"/><path d="M1.500 127.500h5L4 132z" fill="#555"/></svg>
<div style="left:851px;top:487.5px;width:202.5px;height:9px;background:#f6f1e2;border-top:1px solid #d8d2c0"></div>
<div style="left:862px;top:488.5px;width:128px;height:7.5px;background:linear-gradient(#f4eed8,#ece4c8);border:1px solid #d8d2c0"></div>
<svg style="left:852px;top:489.500px" width="190" height="6" viewBox="0 0 190 6"><path d="M5 .5v5L1.500 3z" fill="#c4c0b0"/><path d="M184 .5v5l3.500-2.500z" fill="#555"/></svg>
<!-- broadcast overlay -->
<div style="left:1144px;top:559.5px;width:121px;height:32px;background:#2a2a2a"></div>
<div style="left:1145px;top:560.5px;width:119px;height:12px;background:#8e8e8e"></div>
<div class="t" style="left:1153px;top:562.8px;color:#1c1c1c;font-size:6.600px">Идет трансляция рабочего стола</div>
<div style="left:1145px;top:572.5px;width:119px;height:7.5px;background:#fcc800"></div>
<div style="left:1145px;top:580px;width:119px;height:10.5px;background:#8e9a40"></div>
<div style="left:1176px;top:576.3px;width:57px;height:11.5px;background:linear-gradient(#f2f4f8 0,#f2f4f8 16%,#9db2cd 18%,#8ca6c5);border-radius:1px"></div>
<div class="t" style="left:1185.5px;top:578.3px;color:#5c7ca4;font-size:6.900px">Остановить</div>
<div class="t" style="left:1241px;top:583.5px;color:#f0f4c0;font-size:6.800px">11:11</div>
<svg style="left:1005px;top:364px" width="8" height="12" viewBox="0 0 8 12"><path d="M.5.5v9.500l2.300-2.200 1.600 3.700 1.300-.6-1.600-3.600h3z" fill="#fff" stroke="#111" stroke-width=".8"/></svg>
<svg style="left:1130px;top:584px" width="100" height="18" viewBox="0 0 100 18"><path d="M5.500 9.500h3L7 8z" fill="#e8eef6"/><path d="M18 4.500v8.500" stroke="#fff" stroke-width=".8"/><path d="M18.500 5h3v3h-3zM22 6h3v3h-3z" fill="#fff"/><path d="M31 5.500l2 3 2-3M33 8.500v4.500" stroke="#fff" stroke-width=".9" fill="none"/><rect x="35.500" y="9" width="3.500" height="4" fill="none" stroke="#fff" stroke-width=".7"/><path d="M47 5v7M49.500 3.500v11M52.500 5v9" stroke="#fff" stroke-width="1"/><rect x="50.500" y="7" width="3.500" height="7" fill="#fff" opacity=".85"/><path d="M63 7.500h1.500l2-2v7l-2-2H63z" fill="#fff"/><path d="M68 6.500c1.300 1.300 1.300 3.700 0 5" stroke="#fff" stroke-width=".7" fill="none"/></svg>
<div class="t" style="left:1209px;top:588px;color:#f4f6fa;font-size:6.6px">ENG</div>
<div class="t" style="left:1232px;top:594px;color:#f4f6fa;font-size:6.8px">27.09.2016</div>
</div></div>
</body></html>
